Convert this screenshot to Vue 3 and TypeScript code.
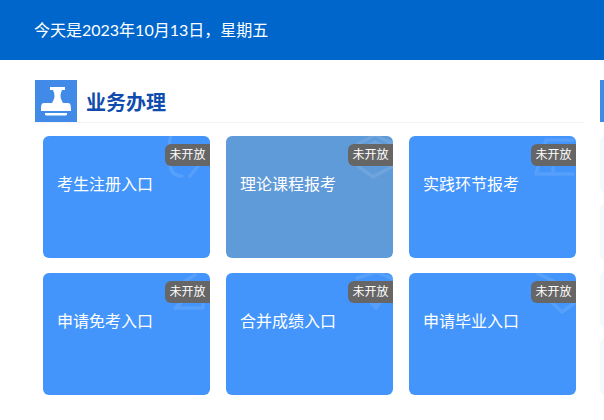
<script setup lang="ts">
interface Entry {
  name: string
  icon: string
  muted?: boolean
}

const entries: Entry[] = [
  { name: '考生注册入口', icon: 'M6 -2C3 5 5 12 5 24C5 34 10 38 17 38M25 38L33 28' },
  { name: '理论课程报考', icon: 'M10 28V6L27 -3L45 6V28L25 39ZM16 10L27 4L39 10', muted: true },
  { name: '实践环节报考', icon: 'M15 2H42M15 2L5 36H42M22 30V36' },
  { name: '申请免考入口', icon: 'M30 0L20 6M38 22V33H10L20 24' },
  { name: '合并成绩入口', icon: 'M9 3L28 -3L45 4M20 24L28 33L35 24M28 33V20' },
  { name: '申请毕业入口', icon: 'M6 -2L26 8M16 23L31 37L45 27' },
]

const sideCards: number[] = [1, 2, 3, 4]
</script>

<template>
  <div class="page">
    <header class="top-bar">今天是2023年10月13日，星期五</header>
    <div class="content">
      <main class="main">
        <div class="section-head">
          <span class="section-icon">
            <svg viewBox="0 0 42 42" width="42" height="42" aria-hidden="true">
              <path d="M15 7H30V10H27C25 14 25 18 27 21L28 23H33C36 23 36 26 36 31H6C6 26 6 23 9 23H17L18 21C20 18 20 14 18 10H15Z" fill="#fff" />
              <path d="M10 33H32V34.500C32 35 31 35.500 30 35.500H12C11 35.500 10 35 10 34.500Z" fill="#fff" />
            </svg>
          </span>
          <h2 class="section-title">业务办理</h2>
        </div>
        <div class="card-grid">
          <div v-for="entry in entries" :key="entry.name" class="card" :class="{ muted: entry.muted }">
            <svg class="watermark" viewBox="0 0 40 40" width="40" height="40" aria-hidden="true">
              <path :d="entry.icon" fill="none" stroke="#fff" stroke-width="3.500" stroke-linejoin="round" stroke-linecap="round" />
            </svg>
            <span class="badge">未开放</span>
            <span class="card-name">{{ entry.name }}</span>
          </div>
        </div>
      </main>
      <aside class="side">
        <div class="side-head"></div>
        <div class="side-list">
          <div v-for="card in sideCards" :key="card" class="side-card"></div>
        </div>
      </aside>
    </div>
  </div>
</template>

<style>
html,
body {
  margin: 0;
  background: #fff;
}
</style>

<style scoped>
.page {
  width: 604px;
  height: 420px;
  overflow: hidden;
  font-family: Lato, "Noto Sans CJK SC", sans-serif;
  color: #fff;
  background: #fff;
}
.top-bar {
  box-sizing: border-box;
  height: 60px;
  padding: 1px 0 0 34px;
  background: #0066cc;
  font-size: 16px;
  line-height: 58px;
}
.content {
  display: flex;
  gap: 15px;
  padding: 20px 0 0 35px;
  width: 700px;
}
.main {
  width: 550px;
  flex: none;
}
.section-head {
  display: flex;
  align-items: flex-start;
  height: 43px;
  box-sizing: border-box;
  border-bottom: 1px solid #f2f4f8;
}
.section-icon {
  display: block;
  width: 42px;
  height: 42px;
  background: #418ae8;
}
.section-icon svg {
  display: block;
}
.section-title {
  margin: 1px 0 0 9px;
  color: #0f4cad;
  font-size: 20px;
  font-weight: 700;
  line-height: 42px;
}
.card-grid {
  display: grid;
  grid-template-columns: repeat(3, 167px);
  grid-auto-rows: 122px;
  column-gap: 16px;
  row-gap: 15px;
  margin: 13px 0 0 8px;
}
.card {
  position: relative;
  display: flex;
  align-items: center;
  overflow: hidden;
  padding: 0 14px 28px;
  border-radius: 6px;
  background: #4395fb;
  font-size: 16px;
}
.card.muted {
  background: #5f9ad9;
}
.watermark {
  position: absolute;
  top: 2px;
  right: 5px;
  opacity: 0.1;
  overflow: visible;
}
.badge {
  position: absolute;
  top: 8px;
  right: 0;
  width: 45px;
  height: 22px;
  border-radius: 6px 0 0 6px;
  background: #666;
  font-size: 12px;
  line-height: 22px;
  text-align: center;
}
.card-name {
  position: relative;
}
.side {
  width: 100px;
  flex: none;
}
.side-head {
  width: 4px;
  height: 42px;
  background: #418ae8;
}
.side-list {
  display: flex;
  flex-direction: column;
  gap: 10px;
  margin-top: 14px;
}
.side-card {
  height: 57.250px;
  border-radius: 6px;
  background: #f5f8fc;
}
</style>
